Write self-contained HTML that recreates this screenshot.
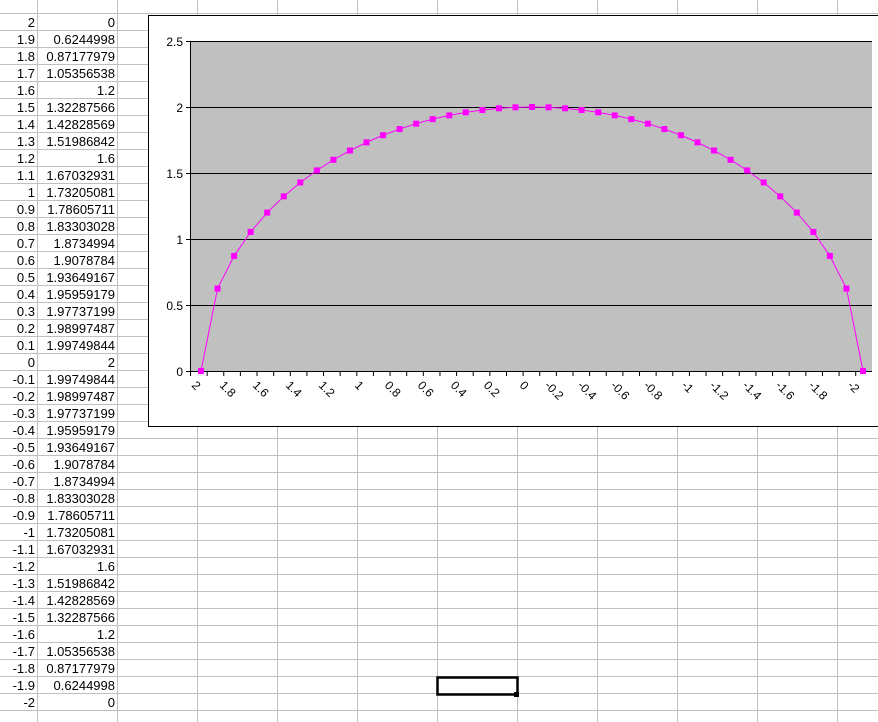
<!DOCTYPE html>
<html><head><meta charset="utf-8"><style>
html,body{margin:0;padding:0;background:#fff;width:878px;height:722px;overflow:hidden;font-family:"Liberation Sans",Arial,sans-serif}
</style></head><body>
<svg width="878" height="722" xmlns="http://www.w3.org/2000/svg" style="position:absolute;left:0;top:0" font-family="Liberation Sans, Arial, sans-serif">
<g id="grid" stroke="#c0c0c0" stroke-width="1"></g>
<rect x="437.5" y="677.5" width="80" height="17" fill="none" stroke="#000" stroke-width="2.5"/>
<rect x="514" y="692" width="5" height="5" fill="#000"/>
<rect x="148.5" y="15.5" width="740" height="411" fill="#fff" stroke="#000" stroke-width="1"/>
<rect x="190" y="41" width="682" height="330" fill="#c0c0c0"/>
<g stroke="#000" stroke-width="1">
<line x1="190" y1="41.5" x2="872" y2="41.5"/>
<line x1="190" y1="107.5" x2="872" y2="107.5"/>
<line x1="190" y1="173.5" x2="872" y2="173.5"/>
<line x1="190" y1="239.5" x2="872" y2="239.5"/>
<line x1="190" y1="305.5" x2="872" y2="305.5"/>
<line x1="190" y1="371.5" x2="872" y2="371.5"/>
<line x1="190.5" y1="41" x2="190.5" y2="372"/>
<line x1="186" y1="41.5" x2="190" y2="41.5"/>
<line x1="186" y1="107.5" x2="190" y2="107.5"/>
<line x1="186" y1="173.5" x2="190" y2="173.5"/>
<line x1="186" y1="239.5" x2="190" y2="239.5"/>
<line x1="186" y1="305.5" x2="190" y2="305.5"/>
<line x1="186" y1="371.5" x2="190" y2="371.5"/>
</g>
<g id="xticks" stroke="#000"></g>
<g font-size="12" text-anchor="end">
<text x="183" y="46">2.5</text><text x="183" y="112">2</text><text x="183" y="178">1.5</text>
<text x="183" y="244">1</text><text x="183" y="310">0.5</text><text x="183" y="376">0</text>
</g>
<g font-size="12">
<text transform="translate(191,386) rotate(45)">2</text>
<text transform="translate(219,386) rotate(45)">1.8</text>
<text transform="translate(252,386) rotate(45)">1.6</text>
<text transform="translate(285,386) rotate(45)">1.4</text>
<text transform="translate(318,386) rotate(45)">1.2</text>
<text transform="translate(354,386) rotate(45)">1</text>
<text transform="translate(384,386) rotate(45)">0.8</text>
<text transform="translate(417,386) rotate(45)">0.6</text>
<text transform="translate(450,386) rotate(45)">0.4</text>
<text transform="translate(483,386) rotate(45)">0.2</text>
<text transform="translate(519,386) rotate(45)">0</text>
<text transform="translate(544,386) rotate(45)">-0.2</text>
<text transform="translate(577,386) rotate(45)">-0.4</text>
<text transform="translate(610,386) rotate(45)">-0.6</text>
<text transform="translate(643,386) rotate(45)">-0.8</text>
<text transform="translate(681,386) rotate(45)">-1</text>
<text transform="translate(709,386) rotate(45)">-1.2</text>
<text transform="translate(742,386) rotate(45)">-1.4</text>
<text transform="translate(775,386) rotate(45)">-1.6</text>
<text transform="translate(808,386) rotate(45)">-1.8</text>
<text transform="translate(847,386) rotate(45)">-2</text>
</g>
<polyline id="line" fill="none" stroke="#ff00ff" stroke-width="1" points=""/>
<g id="marks" fill="#ff00ff"></g>
</svg>
<script>
var ns="http://www.w3.org/2000/svg";
var g=document.getElementById('grid');
function L(p,a,b,c,d){var l=document.createElementNS(ns,'line');l.setAttribute('x1',a);l.setAttribute('y1',b);l.setAttribute('x2',c);l.setAttribute('y2',d);p.appendChild(l);}
for(var y=13.5;y<722;y+=17)L(g,0,y,878,y);
for(var x=37.5;x<878;x+=80)L(g,x,0,x,722);
var pts=[],m=document.getElementById('marks'),xt=document.getElementById('xticks');
for(var i=0;i<=40;i++){
 var xv=Math.round((2-i*0.1)*10)/10;var yv=Math.sqrt(Math.max(0,4-xv*xv));
 var px=201+16.55*i,py=371-132*yv;
 pts.push(px+','+py);
 var r=document.createElementNS(ns,'rect');r.setAttribute('x',px-3);r.setAttribute('y',py-3);r.setAttribute('width',6);r.setAttribute('height',6);m.appendChild(r);
 L(xt,190.5+16.63*i,371,190.5+16.63*i,376);
}
document.getElementById('line').setAttribute('points',pts.join(' '));
</script>
<div style="position:absolute;left:0;top:14px;font-size:13px;line-height:17px">
<div style="position:absolute;left:0;width:35px;text-align:right">2<br>1.9<br>1.8<br>1.7<br>1.6<br>1.5<br>1.4<br>1.3<br>1.2<br>1.1<br>1<br>0.9<br>0.8<br>0.7<br>0.6<br>0.5<br>0.4<br>0.3<br>0.2<br>0.1<br>0<br>-0.1<br>-0.2<br>-0.3<br>-0.4<br>-0.5<br>-0.6<br>-0.7<br>-0.8<br>-0.9<br>-1<br>-1.1<br>-1.2<br>-1.3<br>-1.4<br>-1.5<br>-1.6<br>-1.7<br>-1.8<br>-1.9<br>-2</div>
<div style="position:absolute;left:37px;width:78px;text-align:right">0<br>0.6244998<br>0.87177979<br>1.05356538<br>1.2<br>1.32287566<br>1.42828569<br>1.51986842<br>1.6<br>1.67032931<br>1.73205081<br>1.78605711<br>1.83303028<br>1.8734994<br>1.9078784<br>1.93649167<br>1.95959179<br>1.97737199<br>1.98997487<br>1.99749844<br>2<br>1.99749844<br>1.98997487<br>1.97737199<br>1.95959179<br>1.93649167<br>1.9078784<br>1.8734994<br>1.83303028<br>1.78605711<br>1.73205081<br>1.67032931<br>1.6<br>1.51986842<br>1.42828569<br>1.32287566<br>1.2<br>1.05356538<br>0.87177979<br>0.6244998<br>0</div>
</div>
</body></html>
